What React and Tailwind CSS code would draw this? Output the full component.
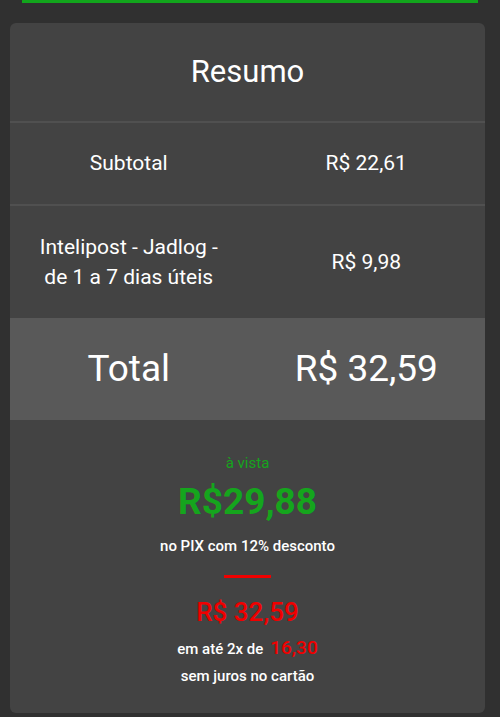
export default function App() {
  return (
    <div className="min-h-[717px] w-[500px] bg-[#303030] font-['Roboto',sans-serif] text-white overflow-hidden">
      <div className="mx-[22px] h-[3px] bg-[#12a51c]" />
      <div className="ml-[10px] mr-[15px] mt-[20px] rounded-[6px] bg-[#434343] overflow-hidden">
        <div className="h-[100px] flex items-center justify-center text-[31px] border-b-2 border-[#505050]">
          Resumo
        </div>
        <div className="h-[83px] grid grid-cols-2 items-center text-center text-[21px] border-b-2 border-[#505050]">
          <div>Subtotal</div>
          <div>R$ 22,61</div>
        </div>
        <div className="h-[112px] grid grid-cols-2 items-center text-center text-[21px] leading-[30px]">
          <div>Intelipost - Jadlog -<br />de 1 a 7 dias úteis</div>
          <div>R$ 9,98</div>
        </div>
        <div className="h-[102px] grid grid-cols-2 items-center text-center text-[37px] bg-[#595959]">
          <div>Total</div>
          <div>R$ 32,59</div>
        </div>
        <div className="flex flex-col items-center pt-[34px] pb-[27px]">
          <div className="text-[15px] text-[#15a51d] leading-[18px]">à vista</div>
          <div className="text-[37px] font-bold text-[#15a51d] leading-[44px] mt-[8px]">R$29,88</div>
          <div className="text-[15px] font-medium leading-[20px] mt-[12px]">no PIX com 12% desconto</div>
          <div className="w-[47px] h-[3px] bg-[#f00000] mt-[19px]" />
          <div className="text-[26px] font-medium text-[#f00000] leading-[30px] mt-[19px]">R$ 32,59</div>
          <div className="text-[15px] font-medium leading-[24px] mt-[9px] flex items-baseline gap-[7px]">
            <span>em até 2x de</span>
            <span className="text-[19px] font-medium text-[#f00000]">16,30</span>
          </div>
          <div className="text-[15px] font-medium leading-[20px] mt-[5px]">sem juros no cartão</div>
        </div>
      </div>
    </div>
  );
}
